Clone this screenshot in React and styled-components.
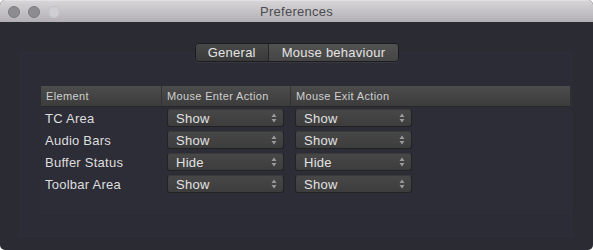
import styled, { createGlobalStyle } from "styled-components";

const rows = [
  { name: "TC Area", enter: "Show", exit: "Show" },
  { name: "Audio Bars", enter: "Show", exit: "Show" },
  { name: "Buffer Status", enter: "Hide", exit: "Hide" },
  { name: "Toolbar Area", enter: "Show", exit: "Show" },
];

const PopUp = ({ value }) => (
  <Select>
    <span>{value}</span>
    <Arrows viewBox="0 0 6 10">
      <path d="M3 0.5 L5.5 4 L0.5 4 Z" />
      <path d="M3 9.5 L5.5 6 L0.5 6 Z" />
    </Arrows>
  </Select>
);

const App = () => {
  return (
    <>
      <GlobalStyle />
      <Window>
        <TitleBar>
          <Lights>
            <Light />
            <Light />
            <Light $dim />
          </Lights>
          <Title>Preferences</Title>
        </TitleBar>
        <Body>
          <SegmentRow>
            <Segmented>
              <Segment>General</Segment>
              <Segment $selected>Mouse behaviour</Segment>
            </Segmented>
          </SegmentRow>
          <TabPanel>
            <Table>
              <HeaderRow>
                <HeaderCell>Element</HeaderCell>
                <HeaderCell>Mouse Enter Action</HeaderCell>
                <HeaderCell>Mouse Exit Action</HeaderCell>
              </HeaderRow>
              {rows.map((r) => (
                <Row key={r.name}>
                  <Label>{r.name}</Label>
                  <Cell>
                    <PopUp value={r.enter} />
                  </Cell>
                  <Cell>
                    <PopUp value={r.exit} />
                  </Cell>
                </Row>
              ))}
            </Table>
          </TabPanel>
        </Body>
      </Window>
    </>
  );
};

export default App;

/**
 *
 * STYLED COMPONENTS
 *
 **/
const GlobalStyle = createGlobalStyle`
  body {
    margin: 0;
    background: #ffffff;
    font-family: "Liberation Sans", Arial, sans-serif;
    letter-spacing: 0.25px;
  }
`;

const Window = styled.div`
  width: 593px;
  height: 250px;
  display: flex;
  flex-direction: column;
  border-radius: 5px;
  overflow: hidden;
  background: #2b2b34;
`;

const TitleBar = styled.div`
  height: 22px;
  display: grid;
  grid-template-columns: 1fr auto 1fr;
  align-items: center;
  background: linear-gradient(#d6d4d7, #b2b0b4);
  border-top: 1px solid #e2e0e3;
  box-sizing: border-box;
`;

const Lights = styled.div`
  display: flex;
  gap: 8px;
  padding-left: 8px;
`;

const Light = styled.div`
  width: 12px;
  height: 12px;
  border-radius: 50%;
  box-sizing: border-box;
  background: ${(p) => (p.$dim ? "#cfced2" : "#8d8c91")};
  border: 1px solid ${(p) => (p.$dim ? "#c2c1c5" : "#7c7b80")};
`;

const Title = styled.div`
  font-size: 13px;
  color: #4c4b50;
  margin-top: -1px;
`;

const Body = styled.div`
  flex: 1;
  display: flex;
  flex-direction: column;
  padding: 21px 21px 13px 20px;
`;

const SegmentRow = styled.div`
  display: flex;
  justify-content: center;
  margin-left: 2px;
  margin-bottom: -10px;
  position: relative;
  z-index: 1;
`;

const Segmented = styled.div`
  display: flex;
  height: 19px;
  border-radius: 4px;
  border: 1px solid #1c1c1e;
  box-sizing: border-box;
  overflow: hidden;
  box-shadow: 0 1px 0 rgba(255, 255, 255, 0.06);
`;

const Segment = styled.div`
  display: flex;
  align-items: center;
  justify-content: center;
  padding: 0 ${(p) => (p.$selected ? "13px" : "12px")};
  font-size: 13px;
  color: #e4e4e4;
  background: ${(p) =>
    p.$selected
      ? "linear-gradient(#525252, #454545)"
      : "linear-gradient(#484848, #3a3a3a)"};
  & + & {
    border-left: 1px solid #262626;
  }
`;

const TabPanel = styled.div`
  flex: 1;
  background: #2c2c36;
  border: 1px solid #2f2f39;
  box-sizing: border-box;
  padding: 33px 1px 20px 20px;
  display: flex;
`;

const Table = styled.div`
  flex: 1;
  background: #2d2d37;
  border-bottom: 1px solid #2a2a33;
`;

const HeaderRow = styled.div`
  display: grid;
  grid-template-columns: 120px 129px 1fr;
  height: 21px;
  background: linear-gradient(#4c4c4c, #3c3c3c);
  border-bottom: 1px solid #262626;
  box-sizing: border-box;
`;

const HeaderCell = styled.div`
  display: flex;
  align-items: center;
  padding-left: 5px;
  font-size: 11px;
  letter-spacing: 0.35px;
  color: #cfcfcf;
  & + & {
    border-left: 1px solid #333333;
  }
`;

const Row = styled.div`
  display: grid;
  grid-template-columns: 121px 128px 1fr;
  height: 22px;
  align-items: center;
`;

const Label = styled.div`
  font-size: 13px;
  color: #dedede;
  padding-left: 4px;
`;

const Cell = styled.div`
  padding-left: 5px;
  display: flex;
`;

const Select = styled.div`
  width: 117px;
  height: 18px;
  box-sizing: border-box;
  display: flex;
  align-items: center;
  justify-content: space-between;
  padding: 0 6px 0 8px;
  border-radius: 3px;
  background: linear-gradient(#474747, #3d3d3d);
  border: 1px solid #222222;
  border-top-color: #3a3a3a;
  font-size: 13px;
  color: #e2e2e2;
`;

const Arrows = styled.svg`
  width: 6px;
  height: 10px;
  fill: #9a9a9a;
`;
